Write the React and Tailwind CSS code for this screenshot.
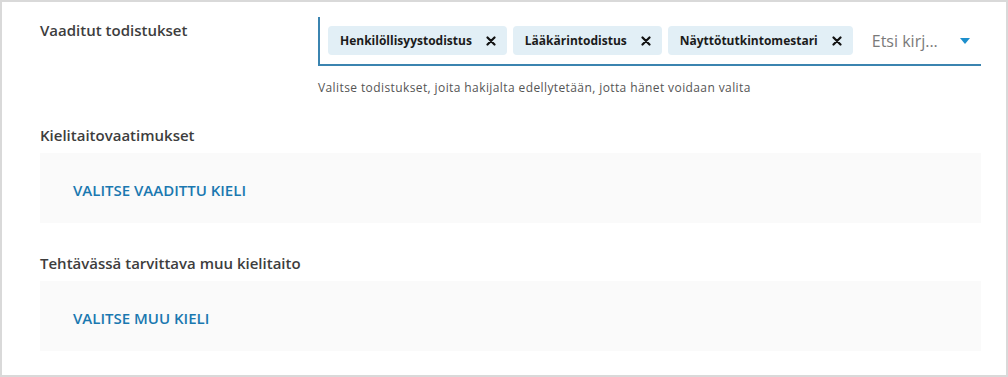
import React from "react";

const chips = ["Henkilöllisyystodistus", "Lääkärintodistus", "Näyttötutkintomestari"];

const Chip = ({ label }) => (
  <div className="flex items-center h-[29px] pl-[12px] pr-[11px] rounded-[4px] bg-[#e2eff6]">
    <span className="text-[12px] font-bold text-[#1b1b1b]">{label}</span>
    <svg className="ml-[14px]" width="10" height="10" viewBox="0 0 10 10">
      <path d="M1.5 1.5 L8.5 8.5 M8.5 1.5 L1.5 8.5" stroke="#111" strokeWidth="2.2" strokeLinecap="round" />
    </svg>
  </div>
);

const LanguageBox = ({ title, action, mt }) => (
  <div className={mt}>
    <div className="h-[20px] leading-[20px] text-[15px] font-semibold text-[#3d3d3d]">{title}</div>
    <div className="mt-[8px] h-[70px] bg-[#fafafa] flex items-center pl-[33px] pt-[4px]">
      <button className="text-[15px] font-semibold uppercase text-[#1a78b0]">{action}</button>
    </div>
  </div>
);

export default function App() {
  return (
    <div
      className="w-[1008px] h-[377px] border-2 border-[#d9d9d9] bg-white pl-[38px] pr-[25px] pt-[15px]"
      style={{ fontFamily: "'Open Sans', 'Liberation Sans', sans-serif" }}
    >
      {/* Vaaditut todistukset */}
      <div className="flex">
        <div className="w-[278px] pt-[3px] h-[20px] leading-[20px] text-[15px] font-semibold text-[#3d3d3d]">
          Vaaditut todistukset
        </div>
        <div className="flex-1">
          <div className="h-[49px] border-l-2 border-b-2 border-[#3b84b0] flex items-center pl-[8px] gap-[6px]">
            {chips.map((c) => (
              <Chip key={c} label={c} />
            ))}
            <span className="ml-[13px] text-[16px] text-[#7a7a7a]">Etsi kirj...</span>
            <svg className="ml-[16px]" width="10" height="6" viewBox="0 0 10 6">
              <path d="M0 0 L10 0 L5 6 Z" fill="#1d8fcc" />
            </svg>
          </div>
          <div className="mt-[14px] h-[16px] leading-[16px] text-[12px] tracking-[0.4px] text-[#555]">
            Valitse todistukset, joita hakijalta edellytetään, jotta hänet voidaan valita
          </div>
        </div>
      </div>

      <LanguageBox title="Kielitaitovaatimukset" action="Valitse vaadittu kieli" mt="mt-[29px]" />
      <LanguageBox title="Tehtävässä tarvittava muu kielitaito" action="Valitse muu kieli" mt="mt-[30px]" />
    </div>
  );
}
